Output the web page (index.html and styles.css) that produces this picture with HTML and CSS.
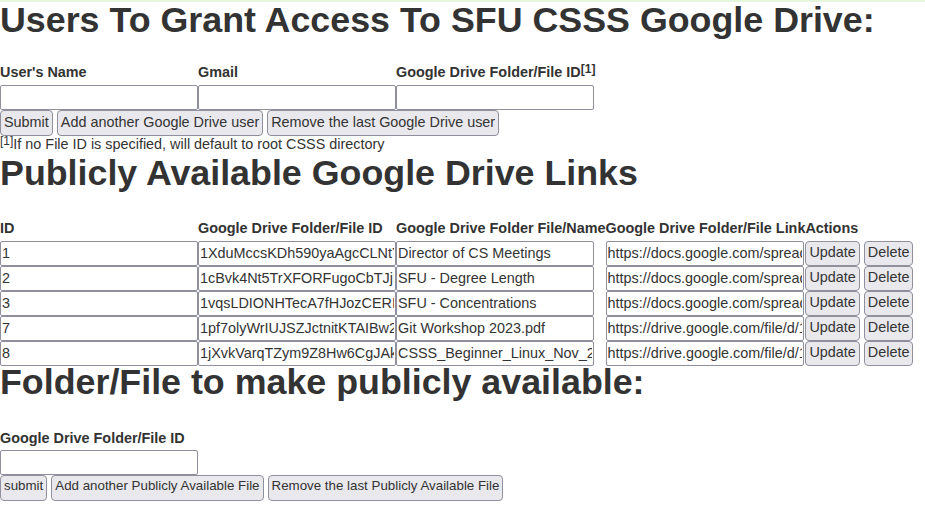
FILE: index.html
```html
<!DOCTYPE html>
<html lang="en">
<head>
<meta charset="utf-8">
<title>SFU CSSS Google Drive</title>
<link rel="stylesheet" href="styles.css">
</head>
<body>
<div class="topbar"></div>

<h1 class="title title-first">Users To Grant Access To SFU CSSS Google Drive:</h1>
<table class="form-table">
  <tr>
    <th>User's Name</th>
    <th>Gmail</th>
    <th>Google Drive Folder/File ID<sup class="note">[1]</sup></th>
  </tr>
  <tr>
    <td><input class="field" type="text"></td>
    <td><input class="field" type="text"></td>
    <td><input class="field" type="text"></td>
  </tr>
</table>
<div class="btn-row">
  <button class="btn">Submit</button>
  <button class="btn">Add another Google Drive user</button>
  <button class="btn">Remove the last Google Drive user</button>
</div>
<p class="footnote"><sup class="note-small">[1]</sup>If no File ID is specified, will default to root CSSS directory</p>

<h1 class="title title-second">Publicly Available Google Drive Links</h1>
<table class="links-table">
  <tr>
    <th>ID</th>
    <th>Google Drive Folder/File ID</th>
    <th>Google Drive Folder File/Name</th>
    <th>Google Drive Folder/File Link</th>
    <th>Actions</th>
  </tr>
  <tr>
    <td><input class="field" type="text" value="1"></td>
    <td><input class="field" type="text" value="1XduMccsKDh590yaAgcCLNtYpZ0gR3bB"></td>
    <td><input class="field" type="text" value="Director of CS Meetings"></td>
    <td><input class="field" type="text" value="https://docs.google.com/spreadsheets/d/1XduMccsKDh590yaAgcCLNt"></td>
    <td><div class="actions"><button class="btn btn-sm">Update</button><button class="btn btn-sm">Delete</button></div></td>
  </tr>
  <tr>
    <td><input class="field" type="text" value="2"></td>
    <td><input class="field" type="text" value="1cBvk4Nt5TrXFORFugoCbTJjHqLw2"></td>
    <td><input class="field" type="text" value="SFU - Degree Length"></td>
    <td><input class="field" type="text" value="https://docs.google.com/spreadsheets/d/1cBvk4Nt5TrXFORFugoCbTJj"></td>
    <td><div class="actions"><button class="btn btn-sm">Update</button><button class="btn btn-sm">Delete</button></div></td>
  </tr>
  <tr>
    <td><input class="field" type="text" value="3"></td>
    <td><input class="field" type="text" value="1vqsLDIONHTecA7fHJozCERIkw9"></td>
    <td><input class="field" type="text" value="SFU - Concentrations"></td>
    <td><input class="field" type="text" value="https://docs.google.com/spreadsheets/d/1vqsLDIONHTecA7fHJozCERI"></td>
    <td><div class="actions"><button class="btn btn-sm">Update</button><button class="btn btn-sm">Delete</button></div></td>
  </tr>
  <tr>
    <td><input class="field" type="text" value="7"></td>
    <td><input class="field" type="text" value="1pf7olyWrIUJSZJctnitKTAIBw2xQ"></td>
    <td><input class="field" type="text" value="Git Workshop 2023.pdf"></td>
    <td><input class="field" type="text" value="https://drive.google.com/file/d/1pf7olyWrIUJSZJctnitKTAIBw2"></td>
    <td><div class="actions"><button class="btn btn-sm">Update</button><button class="btn btn-sm">Delete</button></div></td>
  </tr>
  <tr>
    <td><input class="field" type="text" value="8"></td>
    <td><input class="field" type="text" value="1jXvkVarqTZym9Z8Hw6CgJAkPq"></td>
    <td><input class="field" type="text" value="CSSS_Beginner_Linux_Nov_2023.pdf"></td>
    <td><input class="field" type="text" value="https://drive.google.com/file/d/1jXvkVarqTZym9Z8Hw6CgJAk"></td>
    <td><div class="actions"><button class="btn btn-sm">Update</button><button class="btn btn-sm">Delete</button></div></td>
  </tr>
</table>

<h1 class="title title-third">Folder/File to make publicly available:</h1>
<table class="form-table form-table-single">
  <tr>
    <th>Google Drive Folder/File ID</th>
  </tr>
  <tr>
    <td><input class="field" type="text"></td>
  </tr>
</table>
<div class="btn-row">
  <button class="btn btn-small-font">submit</button>
  <button class="btn btn-small-font">Add another Publicly Available File</button>
  <button class="btn btn-small-font">Remove the last Publicly Available File</button>
</div>
</body>
</html>
```

FILE: styles.css
```css
html, body {
  margin: 0;
  padding: 0;
  background: #ffffff;
}

body {
  font-family: "Liberation Sans", Arial, sans-serif;
  font-size: 14.4px;
  color: #333333;
}

.topbar {
  position: fixed;
  top: 0;
  left: 0;
  right: 0;
  height: 2px;
  background: #e6f6dc;
}

.title {
  margin: 0;
  font-size: 35.8px;
  line-height: 32px;
  font-weight: bold;
  color: #333333;
  white-space: nowrap;
}

.title-first {
  line-height: 40px;
  margin-bottom: 24px;
}

.title-second {
  margin-top: 4px;
  margin-bottom: 31.5px;
}

.title-third {
  margin-top: 0;
  margin-bottom: 32px;
}

table {
  border-collapse: separate;
  border-spacing: 0;
}

th {
  text-align: left;
  vertical-align: top;
  padding: 0;
  font-size: 14.4px;
  line-height: 16.5px;
  font-weight: bold;
  white-space: nowrap;
}

td {
  padding: 0;
  vertical-align: top;
}

.form-table th {
  height: 21px;
}

.form-table-single th {
  height: 20px;
}

.links-table th {
  height: 20.5px;
}

.note {
  font-size: 12px;
  line-height: 0;
  vertical-align: 4px;
}

.note-small {
  font-size: 12px;
  line-height: 0;
  vertical-align: 4px;
  font-weight: normal;
}

.field {
  display: block;
  box-sizing: border-box;
  width: 198px;
  height: 25px;
  margin: 0;
  padding: 0 1px;
  border: 1px solid #8f8f9d;
  border-radius: 2px;
  background: #ffffff;
  font-family: "Liberation Sans", Arial, sans-serif;
  font-size: 14.4px;
  color: #333333;
  outline: none;
}

.links-table td .field {
  height: 25.1px;
}

.btn-row {
  display: flex;
  gap: 4px;
}

.btn {
  box-sizing: border-box;
  height: 26px;
  margin: 0;
  padding: 0 3px 3px;
  border: 1px solid #8f8f9d;
  border-radius: 4px;
  background: #e9e9ed;
  font-family: "Liberation Sans", Arial, sans-serif;
  font-size: 14.4px;
  line-height: 16px;
  color: #333333;
  white-space: nowrap;
}

.btn-small-font {
  font-size: 13.33px;
}

.btn-sm {
  height: 25.1px;
  padding-bottom: 2px;
}

.actions {
  display: flex;
  gap: 4px;
}

.footnote {
  margin: 0;
  font-size: 14.4px;
  line-height: 16.5px;
}
```
